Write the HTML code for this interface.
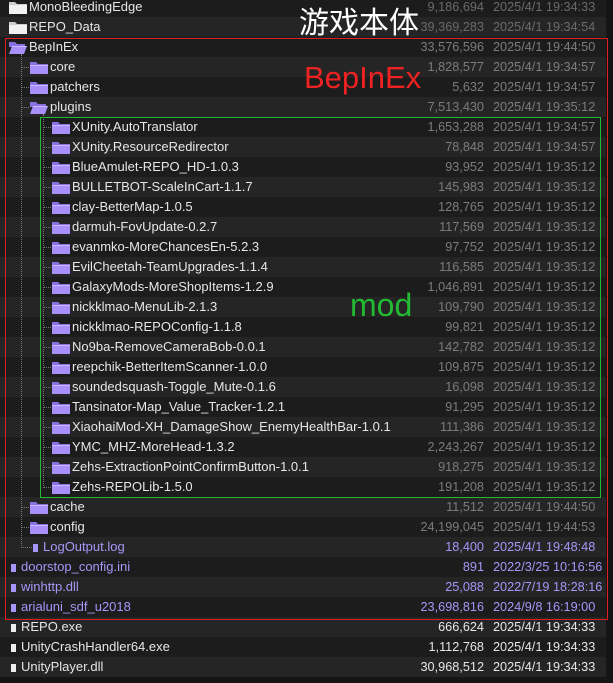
<!DOCTYPE html>
<html><head><meta charset="utf-8"><style>
*{margin:0;padding:0;box-sizing:border-box}
body{width:613px;height:683px;background:#151515;overflow:hidden;position:relative;font-family:"Liberation Sans","Noto Sans CJK SC",sans-serif;font-size:12.7px}
.r{position:absolute;left:0;width:606px;height:20px;line-height:20px;white-space:nowrap}
.e{background:#1c1c1c}.o{background:#252525}
.n{position:absolute;color:#e6e6e6;font-size:13px}
.s{position:absolute;right:122px;text-align:right;color:#7c7c7c}
.d{position:absolute;left:493px;color:#7c7c7c}
.p .n,.p .s,.p .d{color:#a597f7}
.w .s,.w .d{color:#e6e6e6}
.t .s,.t .d{color:#6a6a6a}
.ic{position:absolute;top:4px;width:18px;height:13px}
.sq{position:absolute;top:7px;width:5px;height:8px;background:#a597f7}
.w .sq{background:#eee}
.v{position:absolute;border-left:1px dotted #777}
.h{position:absolute;top:10px;border-top:1px dotted #777;height:0}
</style></head><body>
<svg width="0" height="0" style="position:absolute"><defs>
<symbol id="f" viewBox="0 0 18 13"><path d="M0 1h6l2 2h10v10H0z" fill="#8a70e0"/><rect x="0" y="4" width="18" height="9" fill="#a890f8"/><rect x="0" y="4" width="18" height="1" fill="#c8b8ff"/></symbol>
<symbol id="fo" viewBox="0 0 18 13"><path d="M0 1h6l2 2h8v3H0z" fill="#8a70e0"/><path d="M3 5h15l-3 8H0z" fill="#a890f8"/><path d="M3 5h15l-.4 1H2.6z" fill="#c8b8ff"/></symbol>
<symbol id="fw" viewBox="0 0 18 13"><path d="M0 1h6l2 2h10v10H0z" fill="#cfcfcf"/><rect x="0" y="4" width="18" height="9" fill="#f2f2f2"/></symbol>
</defs></svg>
<div id="rows"></div>
<script>
var R=[
[0,'fw','MonoBleedingEdge','9,186,694','2025/4/1 19:34:33','t'],
[0,'fw','REPO_Data','39,369,283','2025/4/1 19:34:54','t'],
[0,'fo','BepInEx','33,576,596','2025/4/1 19:44:50',''],
[1,'f','core','1,828,577','2025/4/1 19:34:57',''],
[1,'f','patchers','5,632','2025/4/1 19:34:57',''],
[1,'fo','plugins','7,513,430','2025/4/1 19:35:12',''],
[2,'f','XUnity.AutoTranslator','1,653,288','2025/4/1 19:34:57',''],
[2,'f','XUnity.ResourceRedirector','78,848','2025/4/1 19:34:57',''],
[2,'f','BlueAmulet-REPO_HD-1.0.3','93,952','2025/4/1 19:35:12',''],
[2,'f','BULLETBOT-ScaleInCart-1.1.7','145,983','2025/4/1 19:35:12',''],
[2,'f','clay-BetterMap-1.0.5','128,765','2025/4/1 19:35:12',''],
[2,'f','darmuh-FovUpdate-0.2.7','117,569','2025/4/1 19:35:12',''],
[2,'f','evanmko-MoreChancesEn-5.2.3','97,752','2025/4/1 19:35:12',''],
[2,'f','EvilCheetah-TeamUpgrades-1.1.4','116,585','2025/4/1 19:35:12',''],
[2,'f','GalaxyMods-MoreShopItems-1.2.9','1,046,891','2025/4/1 19:35:12',''],
[2,'f','nickklmao-MenuLib-2.1.3','109,790','2025/4/1 19:35:12',''],
[2,'f','nickklmao-REPOConfig-1.1.8','99,821','2025/4/1 19:35:12',''],
[2,'f','No9ba-RemoveCameraBob-0.0.1','142,782','2025/4/1 19:35:12',''],
[2,'f','reepchik-BetterItemScanner-1.0.0','109,875','2025/4/1 19:35:12',''],
[2,'f','soundedsquash-Toggle_Mute-0.1.6','16,098','2025/4/1 19:35:12',''],
[2,'f','Tansinator-Map_Value_Tracker-1.2.1','91,295','2025/4/1 19:35:12',''],
[2,'f','XiaohaiMod-XH_DamageShow_EnemyHealthBar-1.0.1','111,386','2025/4/1 19:35:12',''],
[2,'f','YMC_MHZ-MoreHead-1.3.2','2,243,267','2025/4/1 19:35:12',''],
[2,'f','Zehs-ExtractionPointConfirmButton-1.0.1','918,275','2025/4/1 19:35:12',''],
[2,'f','Zehs-REPOLib-1.5.0','191,208','2025/4/1 19:35:12',''],
[1,'f','cache','11,512','2025/4/1 19:44:50',''],
[1,'f','config','24,199,045','2025/4/1 19:44:53',''],
[1,'s','LogOutput.log','18,400','2025/4/1 19:48:48','p'],
[0,'s','doorstop_config.ini','891','2022/3/25 10:16:56','p'],
[0,'s','winhttp.dll','25,088','2022/7/19 18:28:16','p'],
[0,'s','arialuni_sdf_u2018','23,698,816','2024/9/8 16:19:00','p'],
[0,'s','REPO.exe','666,624','2025/4/1 19:34:33','w'],
[0,'s','UnityCrashHandler64.exe','1,112,768','2025/4/1 19:34:33','w'],
[0,'s','UnityPlayer.dll','30,968,512','2025/4/1 19:34:33','w']];
var h='';
R.forEach(function(r,i){
 var top=-3+20*i,l=r[0],ic='',nx;
 if(r[1]=='s'){var sx=l==0?11:33;ic='<div class="sq" style="left:'+sx+'px"></div>';nx=sx+10;
   if(l==1)ic+='<div class="h" style="left:21px;width:11px"></div>';}
 else{var ix=[9,30,52][l];ic='<svg class="ic" style="left:'+ix+'px"><use href="#'+r[1]+'"/></svg>';nx=ix+20;
   if(l>0)ic+='<div class="h" style="left:'+(l==1?21:43)+'px;width:8px"></div>';}
 h+='<div class="r '+(i%2?'o':'e')+' '+r[5]+'" style="top:'+top+'px">'+ic+'<span class="n" style="left:'+nx+'px">'+r[2]+'</span><span class="s">'+r[3]+'</span><span class="d">'+r[4]+'</span></div>';
});
document.getElementById('rows').innerHTML=h;
</script>
<div class="v" style="left:21px;top:54px;height:494px"></div>
<div class="v" style="left:43px;top:114px;height:374px"></div>
<div style="position:absolute;left:5px;top:38px;width:603px;height:582px;border:1px solid #e02020"></div>
<div style="position:absolute;left:40px;top:117px;width:561px;height:381px;border:1px solid #22bb33"></div>
<div style="position:absolute;left:299px;top:0px;color:#fff;font-size:30px;line-height:40px;font-family:'Noto Sans CJK SC',sans-serif">游戏本体</div>
<div style="position:absolute;left:304px;top:58px;color:#ee2222;font-size:31px;line-height:40px">BepInEx</div>
<div style="position:absolute;left:350px;top:285px;color:#22bb33;font-size:32px;line-height:40px">mod</div>
</body></html>
